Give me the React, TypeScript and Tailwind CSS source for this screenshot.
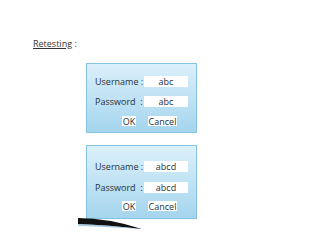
const font = { fontFamily: '"Open Sans", "DejaVu Sans", sans-serif' }

function Dialog({ user, pass, tall }: { user: string; pass: string; tall?: boolean }) {
  return (
    <div className={`relative w-[111px] ${tall ? 'h-[74px] pt-[15px]' : 'h-[70px] pt-[12px]'} border border-[#86c3e3] bg-gradient-to-b from-[#dbf0fa] to-[#a5d5ee] pl-[8px] pr-[8px] text-[9px] leading-none whitespace-nowrap text-[#26323a]`}>
      <div className="flex items-center justify-between">
        <span>Username :</span>
        <span className="flex h-[11px] w-[44px] items-center justify-center bg-white">{user}</span>
      </div>
      <div className={`flex items-center justify-between ${tall ? 'mt-[10px]' : 'mt-[9px]'}`}>
        <span>Password &nbsp;:</span>
        <span className="flex h-[11px] w-[44px] items-center justify-center bg-white">{pass}</span>
      </div>
      <div className={`flex justify-center gap-[12px] pl-[16px] ${tall ? 'mt-[8px]' : 'mt-[9px]'}`}>
        <span className="flex h-[10px] w-[14px] items-center justify-center bg-white">OK</span>
        <span className="flex h-[10px] w-[29px] items-center justify-center bg-white">Cancel</span>
      </div>
      {tall && (
        <svg className="absolute left-[-9px] top-[72px]" width="70" height="14" viewBox="0 0 70 14">
          <path d="M0 0 Q30 0 64 11 Q30 7 0 6 Z" fill="#111" />
          <path d="M0 6 Q30 7 64 11 Q30 9 0 8 Z" fill="#6fa9c9" opacity="0.6" />
        </svg>
      )}
    </div>
  )
}

export default function App() {
  return (
    <div className="h-[240px] w-[320px] bg-white" style={font}>
      <div className="pl-[33px] pt-[38px] text-[9px] leading-[12px] text-[#333]">
        <span className="underline">Retesting</span> :
      </div>
      <div className="ml-[86px] mt-[13px] flex flex-col gap-[12px]">
        <Dialog user="abc" pass="abc" />
        <Dialog user="abcd" pass="abcd" tall />
      </div>
    </div>
  )
}
